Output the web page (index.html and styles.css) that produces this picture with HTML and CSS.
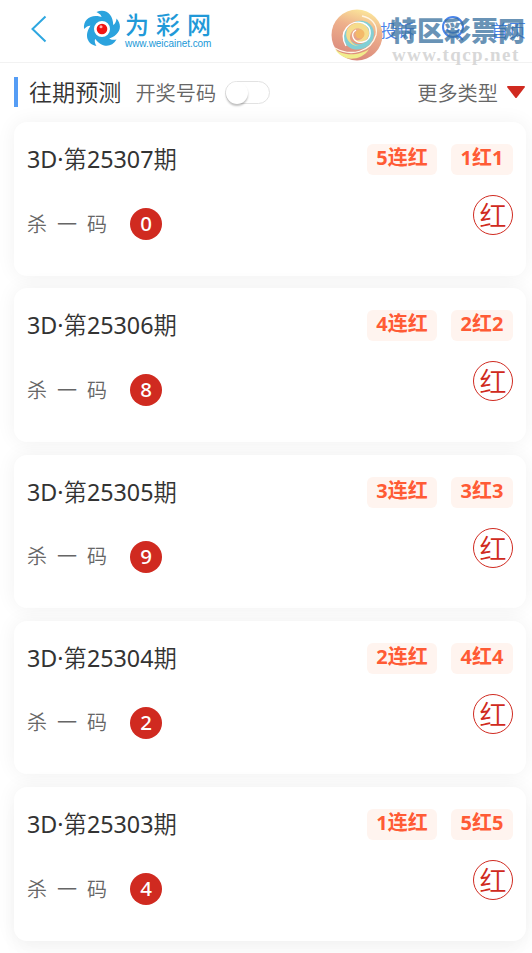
FILE: index.html
```
<!DOCTYPE html>
<html lang="zh-CN">

<head>
    <meta charset="UTF-8">
    <title>往期预测</title>
    <link rel="stylesheet" href="styles.css">
</head>

<body>

    <header class="header">
        <svg class="back" width="16" height="28" viewBox="0 0 16 28">
            <path d="M14.5 1.5L1.5 14L14.5 26.5" fill="none" stroke="#2ea7e0" stroke-width="2" />
        </svg>
        <div class="logo">
            <svg width="38" height="38" viewBox="0 0 38 38">
                <g fill="#2ba3de">
                    <path id="arm" d="M1 19C0 8 10 3 21 8C15 8 10 11 9 16C6 15 4 16 1 19Z" />
                    <use href="#arm" transform="rotate(72 19 19)" />
                    <use href="#arm" transform="rotate(144 19 19)" />
                    <use href="#arm" transform="rotate(216 19 19)" />
                    <use href="#arm" transform="rotate(288 19 19)" />
                </g>
                <circle cx="19" cy="19" r="10" fill="none" stroke="#2ba3de" stroke-width="4" />
                <circle cx="19" cy="19" r="5.3" fill="#f21414" />
                <circle cx="18" cy="16.8" r="1.5" fill="#ffb0b0" />
            </svg>
            <div class="logo-text">
                <div class="logo-name">为彩网</div>
                <div class="logo-url">www.weicainet.com</div>
            </div>
        </div>
        <nav class="nav">
            <span>投诉</span>
            <svg width="26" height="28" viewBox="0 0 26 28" fill="none" stroke="#4a84ea" stroke-width="2">
                <circle cx="13" cy="12" r="10" />
                <path d="M7 14C9 19 17 19 19 14M18 20L23 25" />
            </svg>
            <span>首页</span>
        </nav>
        <div class="watermark">
            <svg width="54" height="54" viewBox="0 0 54 54">
                <defs>
                    <linearGradient id="ball" x1="0.6" y1="0" x2="0.3" y2="1">
                        <stop offset="0" stop-color="#fbe59a" />
                        <stop offset="0.35" stop-color="#eeb08c" />
                        <stop offset="1" stop-color="#d8857a" />
                    </linearGradient>
                </defs>
                <circle cx="27" cy="27" r="25.5" fill="url(#ball)" />
                <path d="M5 41C14 49 31 47 39 41C34 50 23 52 16 50C11 48 7 45 5 41Z" fill="#f1ec8c" />
                <path d="M5 40C21 49 41 44 46 27C48 17 42 10 32 8" fill="none" stroke="#fff6e6" stroke-width="1.3" />
                <path d="M24 14C38 9 47 20 43 31C39 42 22 46 15 35C13 31 14 24 17 20C15 37 33 41 38 30C42 20 33 14 24 14Z" fill="#82cfd4" />
                <path d="M17 22C22 12 37 13 39 24C40 33 29 37 24 31C28 34 34 31 34 26C33 19 24 18 21 25C18 31 22 37 29 38C20 38 14 30 17 22Z" fill="#f5dc8c" />
                <circle cx="30" cy="26" r="4.5" fill="#f3b968" />
                <path d="M16 38C8 24 20 11 33 15C43 19 42 32 33 34C24 36 19 26 26 22" fill="none" stroke="#fff" stroke-width="1.4" />
            </svg>
            <div class="watermark-text">
                <div class="watermark-name">特区彩票网</div>
                <div class="watermark-url">www.tqcp.net</div>
            </div>
        </div>
    </header>

    <div class="toolbar">
        <h1>往期预测</h1>
        <span class="label">开奖号码</span>
        <span class="switch"></span>
        <span class="label more">更多类型</span>
        <svg width="18" height="12" viewBox="0 0 18 12">
            <path d="M0.5 0H17.5L18 1L9.5 12H8.5L0 1Z" fill="#d02a20" />
        </svg>
    </div>

    <div class="list" id="list"></div>

    <script>
        const records = [
            { issue: '25307', streak: '5连红', result: '1红1', num: 0 },
            { issue: '25306', streak: '4连红', result: '2红2', num: 8 },
            { issue: '25305', streak: '3连红', result: '3红3', num: 9 },
            { issue: '25304', streak: '2连红', result: '4红4', num: 2 },
            { issue: '25303', streak: '1连红', result: '5红5', num: 4 }
        ];

        document.getElementById('list').innerHTML = records.map(function (r) {
            return '<div class="card">' +
                '<div class="row"><div class="title"><b>3D·</b>第<b>' + r.issue + '</b>期</div>' +
                '<div class="tags"><span class="tag streak">' + r.streak + '</span><span class="tag">' + r.result + '</span></div></div>' +
                '<div class="row bottom"><div class="pick"><span class="pick-name">杀一码</span><span class="ball">' + r.num + '</span></div>' +
                '<span class="stamp">红</span></div>' +
                '</div>';
        }).join('');
    </script>

</body>

</html>
```
FILE: styles.css
```
* {
    box-sizing: border-box;
}

body {
    margin: 0;
    height: 953px;
    overflow: hidden;
    background-color: #fff;
    color: #333;
    font-family: 'Noto Sans', 'Noto Sans CJK SC', sans-serif;
}

.header {
    position: relative;
    display: flex;
    align-items: center;
    height: 63px;
    padding: 0 6px 4px 31px;
    border-bottom: 1px solid #f2f2f2;
}

.logo {
    display: flex;
    align-items: center;
    gap: 4px;
    margin-left: 36px;
}

.logo-text {
    padding-top: 2px;
    color: #2199d8;
}

.logo-name {
    font-size: 24px;
    line-height: 27px;
    font-weight: 500;
    letter-spacing: 7px;
}

.logo-url {
    font-family: 'Liberation Sans', sans-serif;
    font-size: 10px;
    line-height: 12px;
    letter-spacing: -0.05px;
}

.nav {
    display: flex;
    align-items: center;
    gap: 25px;
    margin-left: auto;
    color: #4a84ea;
    font-size: 17.5px;
    font-weight: 350;
}

/* Site stamp over the right side of the header */
.watermark {
    position: absolute;
    top: 8px;
    left: 330px;
    display: flex;
    gap: 6px;
}

.watermark-text {
    white-space: nowrap;
}

.watermark-name {
    margin-top: 5px;
    color: rgba(55, 111, 158, 0.75);
    font-size: 27px;
    line-height: 35px;
    font-weight: 900;
}

.watermark-url {
    padding-left: 2px;
    color: #d8d8d8;
    font-family: 'Liberation Serif', serif;
    font-size: 19px;
    line-height: 13px;
    font-weight: bold;
    letter-spacing: 1.4px;
}

.toolbar {
    display: flex;
    align-items: center;
    height: 59px;
    padding: 0 7px 1px 14px;
}

h1 {
    margin: 0 14px 0 0;
    padding-left: 11px;
    border-left: 4px solid #559df5;
    font-size: 23.1px;
    line-height: 30px;
    font-weight: 350;
}

.label {
    color: #666;
    font-size: 20.2px;
    font-weight: 350;
}

.switch {
    width: 45px;
    height: 23px;
    margin-left: 9px;
    border: 1px solid #e2e2e2;
    border-radius: 12px;
}

.switch::before {
    content: '';
    display: block;
    width: 22px;
    height: 22px;
    border-radius: 50%;
    background-color: #fff;
    box-shadow: 0 2px 2px rgba(0, 0, 0, 0.25);
}

.more {
    margin-left: auto;
    margin-right: 9px;
}

.list {
    display: flex;
    flex-direction: column;
    gap: 12.7px;
    padding: 0 6px 0 14px;
}

.card {
    flex: none;
    height: 153.6px;
    padding: 22px 13px 0;
    border-radius: 13px;
    background-color: #fff;
    box-shadow: 0 0 20px rgba(0, 0, 0, 0.06);
}

.card:last-child {
    box-shadow: 0 0 20px rgba(0, 0, 0, 0.06), 0 16px 20px rgba(0, 0, 0, 0.02);
}

.row {
    display: flex;
    justify-content: space-between;
}

.title {
    font-size: 23.3px;
    line-height: 31px;
    font-weight: 350;
}

.title b {
    font-weight: 400;
}

.tags {
    display: flex;
    gap: 14px;
}

.tag {
    width: 62px;
    height: 31px;
    border-radius: 6px;
    background-color: #fff4ef;
    color: #ff5b35;
    font-size: 20px;
    line-height: 28px;
    font-weight: bold;
    text-align: center;
}

.streak {
    width: 70px;
}

.bottom {
    margin-top: 20px;
}

.pick {
    display: flex;
    align-items: center;
    height: 32px;
    margin-top: 13px;
}

.pick-name {
    width: 103px;
    padding-bottom: 2px;
    color: #666;
    font-size: 20px;
    font-weight: 350;
    letter-spacing: 10px;
}

.ball {
    width: 32px;
    height: 32px;
    border-radius: 50%;
    background-color: #d02a20;
    color: #fff;
    font-size: 20.5px;
    line-height: 31px;
    font-weight: 500;
    text-align: center;
}

.stamp {
    width: 40px;
    height: 40px;
    border: 1px solid #d02a20;
    border-radius: 50%;
    color: #d02a20;
    font-size: 27px;
    line-height: 39px;
    font-weight: 350;
    text-align: center;
}
```
